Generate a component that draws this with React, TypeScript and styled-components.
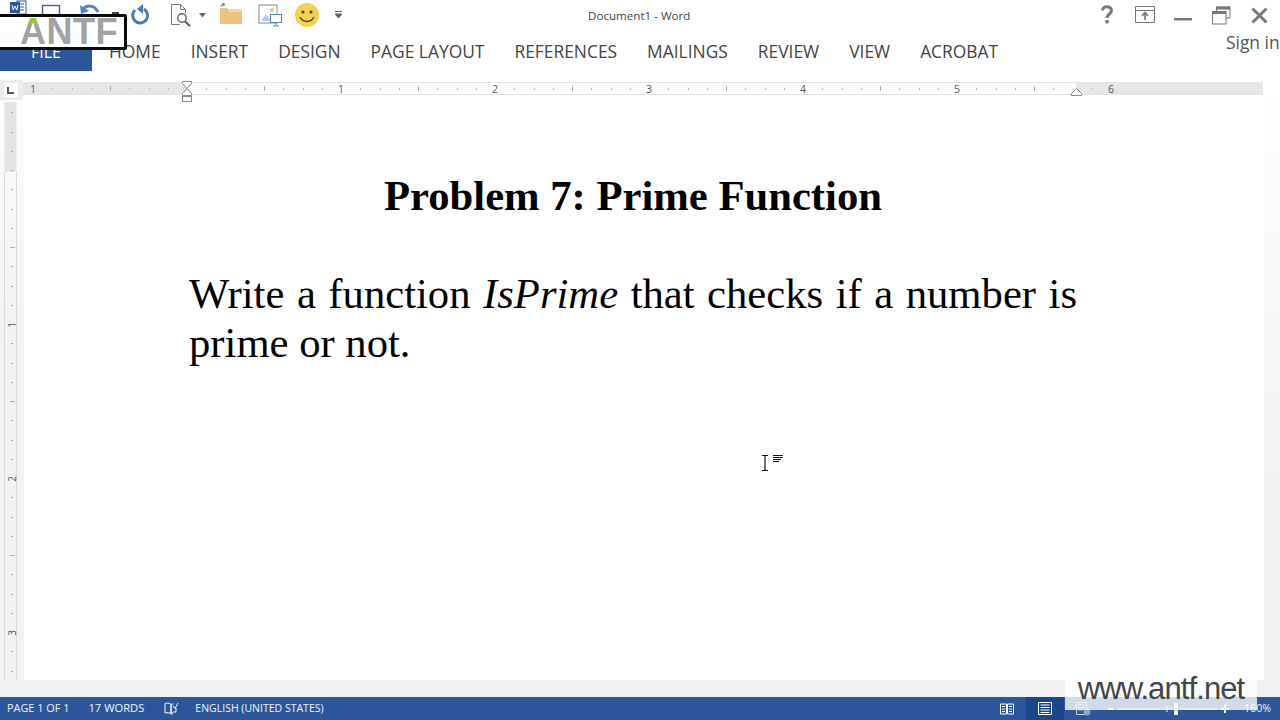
import styled, { createGlobalStyle } from "styled-components";

const UI_FONT = `"Open Sans", "Noto Sans", sans-serif`;
const DOC_FONT = `"Liberation Serif", "Times New Roman", serif`;
const BLUE = "#2b579a";

const GlobalStyle = createGlobalStyle`
  html, body {
    margin: 0;
    padding: 0;
    background: #fff;
  }
`;

const Window = styled.div`
  position: relative;
  width: 1280px;
  height: 720px;
  display: flex;
  flex-direction: column;
  overflow: hidden;
  background: #fff;
  font-family: ${UI_FONT};
`;

const TitleBar = styled.div`
  position: relative;
  height: 32px;
  flex: none;
  display: flex;
  align-items: flex-start;
  justify-content: space-between;
`;

const QuickAccess = styled.div`
  display: flex;
  align-items: flex-start;
`;

const QuickIcon = styled.svg<{ $left: number; $top?: number }>`
  display: block;
  flex: none;
  margin-left: ${(p) => p.$left}px;
  margin-top: ${(p) => p.$top ?? 0}px;
`;

const DocTitle = styled.div`
  position: absolute;
  left: 588px;
  top: 8px;
  font-size: 11.6px;
  line-height: 16px;
  color: #444;
  white-space: nowrap;
`;

const WindowControls = styled.div`
  display: flex;
  align-items: flex-start;
  padding-right: 12px;
`;

const TabBar = styled.div`
  height: 39px;
  flex: none;
  display: flex;
  align-items: stretch;
  gap: 30px;
`;

const FileTab = styled.div`
  width: 92px;
  margin-right: -13px;
  display: flex;
  align-items: center;
  justify-content: center;
  background: ${BLUE};
  color: #fff;
  font-size: 16px;
`;

const Tab = styled.div`
  display: flex;
  align-items: center;
  padding-bottom: 1px;
  color: #444;
  font-size: 17.4px;
  white-space: nowrap;
`;

const SignIn = styled.div`
  position: absolute;
  left: 1226px;
  top: 32px;
  color: #555;
  font-size: 17.4px;
  line-height: 21px;
  white-space: nowrap;
`;

const RulerRow = styled.div`
  position: relative;
  z-index: 1;
  height: 20px;
  flex: none;
  margin-top: 9px;
  display: flex;
`;

const RulerCorner = styled.div`
  width: 23px;
  height: 20px;
  flex: none;
  display: flex;
  align-items: center;
  padding-left: 4px;
  box-sizing: border-box;
  background: #ececec;
`;

const CornerBox = styled.div`
  width: 14px;
  height: 14px;
  background: #fff;
  display: flex;
  align-items: center;
  justify-content: center;
`;

const RulerSvg = styled.svg`
  display: block;
  overflow: visible;
  margin-top: 1px;
`;

const Workspace = styled.div`
  flex: 1;
  min-height: 0;
  display: flex;
`;

const LeftRail = styled.div`
  width: 24px;
  flex: none;
  padding: 2px 0 0 4px;
  box-sizing: border-box;
  background: linear-gradient(#fdfdfd 0, #f2f2f2 240px);
`;

const Page = styled.main`
  flex: 1;
  box-sizing: border-box;
  padding: 71px 0 0 165px;
  background: #fff;
`;

const RightRail = styled.div`
  width: 16px;
  flex: none;
  background: linear-gradient(#fefefe 0, #f2f2f2 400px);
`;

const DocText = styled.div`
  width: 888px;
  font-family: ${DOC_FONT};
  font-size: 42.67px;
  line-height: 49px;
  color: #000;
`;

const DocHeading = styled.h1`
  margin: 0 0 49px;
  font: inherit;
  font-weight: 700;
  text-align: center;
`;

const DocParagraph = styled.p`
  margin: 0;
  text-align: justify;
`;

const BottomBand = styled.div`
  height: 17px;
  flex: none;
  background: #f1f1f1;
`;

const StatusBar = styled.footer`
  height: 23px;
  flex: none;
  display: flex;
  align-items: center;
  background: ${BLUE};
  color: #f2f5fa;
  white-space: nowrap;
`;

const StatusText = styled.span<{ $left: number; $size: number }>`
  margin-left: ${(p) => p.$left}px;
  margin-bottom: 2px;
  font-size: ${(p) => p.$size}px;
`;

const StatusGroup = styled.div`
  margin-left: auto;
  height: 100%;
  display: flex;
  align-items: center;
`;

const ViewButton = styled.div<{ $active?: boolean }>`
  width: 38px;
  height: 100%;
  display: flex;
  align-items: center;
  justify-content: center;
  background: ${(p) => (p.$active ? "#19478a" : "transparent")};
`;

const ZoomSlider = styled.svg`
  display: block;
  margin-left: 6px;
`;

const ZoomLabel = styled.span`
  margin: 0 9px 2px 12px;
  font-size: 10.6px;
`;

const LogoBadge = styled.div`
  position: absolute;
  left: -6px;
  top: 14px;
  width: 133px;
  height: 36px;
  box-sizing: border-box;
  border: 3px solid #0a0a0a;
  border-radius: 2px;
  background: rgba(255, 255, 255, 0.98);
  display: flex;
  align-items: center;
  justify-content: flex-end;
  padding-right: 6px;
`;

const LogoText = styled.span`
  font-family: "Liberation Sans", Arial, sans-serif;
  font-weight: 700;
  font-size: 36px;
  line-height: 30px;
  color: #a2a2a2;
  letter-spacing: 0.5px;
  white-space: nowrap;
`;

const LogoAccent = styled.span`
  background: linear-gradient(#93c83e 0 32%, #a2a2a2 32% 100%);
  -webkit-background-clip: text;
  background-clip: text;
  color: transparent;
`;

const Watermark = styled.div`
  position: absolute;
  left: 1065px;
  top: 680px;
  width: 192px;
  height: 30px;
  display: flex;
  align-items: flex-start;
  justify-content: center;
  background: rgba(255, 255, 255, 0.78);
`;

const WatermarkText = styled.span`
  margin-top: -9px;
  font-family: "Liberation Sans", Arial, sans-serif;
  font-size: 31px;
  line-height: 36px;
  letter-spacing: -0.9px;
  color: #444;
  white-space: nowrap;
`;

const Cursor = styled.svg`
  position: absolute;
  left: 760px;
  top: 453px;
`;

const TABS = ["HOME", "INSERT", "DESIGN", "PAGE LAYOUT", "REFERENCES", "MAILINGS", "REVIEW", "VIEW", "ACROBAT"];

const INCH = 154;
const H_ZERO = 164; // 187 on screen, ruler svg begins at x=23
const V_ZERO = 70; // 172 on screen, svg begins at y=102

const HorizontalRuler = () => {
  const ticks: number[] = [];
  for (let i = -8; i <= 48; i++) ticks.push(i);
  return (
    <RulerSvg width="1240" height="19">
      <rect x="0" y="1" width="164" height="13" fill="#e6e6e6" />
      <rect x="1053" y="1" width="187" height="13" fill="#e6e6e6" />
      <path d="M164 1.5H1053M164 13.5H1053" stroke="#e2e2e2" />
      {ticks.map((i) => {
        const x = Math.round(H_ZERO + (i * INCH) / 8) + 0.5;
        if (i % 8 === 0) return null;
        const half = i % 4 === 0;
        return <path key={i} d={`M${x} ${half ? 5 : 7}V${half ? 10 : 9}`} stroke={half ? "#aaa" : "#bbb"} />;
      })}
      {[-1, 1, 2, 3, 4, 5, 6].map((n) => (
        <text key={n} x={H_ZERO + n * INCH} y="12" textAnchor="middle" fontSize="10.5" fill="#555" fontFamily={UI_FONT}>
          {Math.abs(n)}
        </text>
      ))}
      <path d="M159.5 .5h9v2l-4.500 5-4.500-5zM164 7.500l4.500 5v2h-9v-2z" fill="#fff" stroke="#8a8a8a" />
      <rect x="159.5" y="15.5" width="9" height="5" fill="#fff" stroke="#8a8a8a" />
      <path d="M1053.5 7.500l5 5v2h-10v-2z" fill="#fff" stroke="#8a8a8a" />
    </RulerSvg>
  );
};

const VerticalRuler = () => {
  const ticks: number[] = [];
  for (let i = -3; i <= 27; i++) ticks.push(i);
  return (
    <svg width="14" height="578" style={{ display: "block" }}>
      <rect x="0.5" y="0" width="12" height="70" fill="#e4e4e4" />
      <path d="M0.5 70V578M12.5 70V578" stroke="#dadada" />
      {ticks.map((i) => {
        const y = Math.round(V_ZERO + (i * INCH) / 8) - 1.5;
        if (i % 8 === 0 && i !== 0) return null;
        const half = i % 4 === 0 && i !== 0;
        return <path key={i} d={half ? `M6 ${y}H11` : `M7 ${y}H9`} stroke="#aaa" />;
      })}
      {[1, 2, 3].map((n) => (
        <text
          key={n}
          x="0"
          y="0"
          transform={`translate(12 ${V_ZERO + n * INCH - 1}) rotate(-90)`}
          textAnchor="middle"
          fontSize="10"
          fill="#555"
          fontFamily={UI_FONT}
        >
          {n}
        </text>
      ))}
    </svg>
  );
};

export default function App() {
  return (
    <Window>
      <GlobalStyle />
      <TitleBar>
        <QuickAccess>
          <QuickIcon $left={10} width="17" height="16" viewBox="0 0 17 16">
            <rect x="7" y="1" width="9" height="13" fill="#fff" stroke="#2b579a" />
            <path d="M10 4h4M10 7h4M10 10h4" stroke="#2b579a" />
            <rect x="0" y="2" width="10" height="11" fill="#2b579a" />
            <path d="M2 5l1.2 5 1.8-4 1.8 4L8 5" stroke="#fff" fill="none" strokeWidth="1" />
          </QuickIcon>
          <QuickIcon $left={14} width="20" height="16" viewBox="0 0 20 16">
            <rect x="1.5" y="5.5" width="17" height="10" fill="none" stroke="#6b4a9c" strokeWidth="1.4" />
          </QuickIcon>
          <QuickIcon $left={18} width="22" height="20" viewBox="0 0 22 20">
            <path d="M3 10c4-5 12-6 16 2" fill="none" stroke="#4f86b8" strokeWidth="3" />
            <path d="M1 5l1 9 8-3z" fill="#4f86b8" />
          </QuickIcon>
          <QuickIcon $left={11} width="8" height="18" viewBox="0 0 8 18">
            <rect x="0" y="12" width="7" height="2" fill="#444" />
          </QuickIcon>
          <QuickIcon $left={8} $top={4} width="22" height="24" viewBox="0 0 22 24">
            <path d="M5 5a7.500 7.500 0 1 0 9-1" fill="none" stroke="#3f7fb5" strokeWidth="3" transform="translate(2 1)" />
            <path d="M14 0v10l-6-5z" fill="#3f7fb5" transform="translate(1 0)" />
          </QuickIcon>
          <QuickIcon $left={20} $top={4} width="23" height="23" viewBox="0 0 23 23">
            <path d="M1.500 20.500V.5h9l5 5v4M1.500 20.500h8" fill="none" stroke="#777" />
            <path d="M10.500 .5v5h5" fill="none" stroke="#777" />
            <circle cx="12" cy="14" r="4.300" fill="#fff" stroke="#666" strokeWidth="1.500" />
            <path d="M15 17.500l5 4.500" stroke="#555" strokeWidth="2" />
          </QuickIcon>
          <QuickIcon $left={5} $top={13} width="9" height="5" viewBox="0 0 9 5">
            <path d="M1 0h7l-3.500 4.500z" fill="#666" />
          </QuickIcon>
          <QuickIcon $left={12} $top={3} width="24" height="22" viewBox="0 0 24 22">
            <path d="M1 5h7l2 2h13v14H1z" fill="#efc27d" />
            <path d="M10 6h13v3H10z" fill="#f5d7a4" />
            <path d="M2 4c0-2 1-3 3-3M4 0l2 1.500-2 1.500z" stroke="#3f7fb5" fill="none" />
          </QuickIcon>
          <QuickIcon $left={15} $top={4} width="25" height="23" viewBox="0 0 25 23">
            <rect x="1" y="1" width="18" height="18" fill="#fff" stroke="#888" />
            <path d="M3 17l5-7 5 7z" fill="#b5cde6" />
            <circle cx="14" cy="6" r="2" fill="#efc27d" />
            <rect x="12.500" y="10.500" width="11" height="8" fill="#fff" stroke="#4f86b8" />
            <path d="M18 18.500v3M15 22h6" stroke="#4f86b8" />
          </QuickIcon>
          <QuickIcon $left={11} $top={2} width="26" height="26" viewBox="0 0 26 26">
            <circle cx="13" cy="13" r="12" fill="#f6d14d" />
            <circle cx="9" cy="10" r="1.600" fill="#444" />
            <circle cx="17" cy="10" r="1.600" fill="#444" />
            <path d="M6 15c3 6 11 6 14 0" fill="none" stroke="#444" strokeWidth="1.400" />
          </QuickIcon>
          <QuickIcon $left={14} $top={11} width="9" height="9" viewBox="0 0 9 9">
            <path d="M1 .5h7M1 3h7l-3.500 4z" stroke="#666" fill="#666" strokeWidth="1" />
          </QuickIcon>
        </QuickAccess>
        <DocTitle>Document1 - Word</DocTitle>
        <WindowControls>
          <QuickIcon $left={0} $top={5} width="14" height="20" viewBox="0 0 14 20">
            <path d="M2.500 5.500c0-5 9-5 9 0 0 3.500-4.500 3.500-4.500 7.500" fill="none" stroke="#777" strokeWidth="3" />
            <rect x="5.300" y="15" width="3.400" height="3.400" fill="#777" />
          </QuickIcon>
          <QuickIcon $left={21} $top={6} width="21" height="18" viewBox="0 0 21 18">
            <path d="M.5 .5h19v16H.5zM.5 4.500h19" fill="none" stroke="#777" />
            <path d="M10 14V7M7 10l3-3.500 3 3.500" fill="none" stroke="#777" strokeWidth="1.600" />
          </QuickIcon>
          <QuickIcon $left={18} $top={18} width="19" height="4" viewBox="0 0 19 4">
            <rect width="18" height="2.400" fill="#777" />
          </QuickIcon>
          <QuickIcon $left={19} $top={6} width="19" height="19" viewBox="0 0 19 19">
            <path d="M4.500 5V.8h13.500v11h-4" fill="none" stroke="#777" />
            <path d="M4.500 1h13.500v2.500H4.500z" fill="#777" />
            <rect x=".5" y="5.500" width="13.500" height="12.500" fill="#fff" stroke="#777" />
            <rect x=".5" y="5.500" width="13.500" height="2.500" fill="#777" />
          </QuickIcon>
          <QuickIcon $left={20} $top={7} width="17" height="17" viewBox="0 0 17 17">
            <path d="M1.500 1.500l14 14M15.500 1.500l-14 14" stroke="#777" strokeWidth="3" />
          </QuickIcon>
        </WindowControls>
      </TitleBar>

      <TabBar>
        <FileTab>FILE</FileTab>
        {TABS.map((tab) => (
          <Tab key={tab}>{tab}</Tab>
        ))}
      </TabBar>
      <SignIn>Sign in</SignIn>

      <RulerRow>
        <RulerCorner>
          <CornerBox>
            <svg width="8" height="8" viewBox="0 0 8 8">
              <path d="M1 1v6h6" fill="none" stroke="#555" strokeWidth="2" />
            </svg>
          </CornerBox>
        </RulerCorner>
        <HorizontalRuler />
      </RulerRow>

      <Workspace>
        <LeftRail>
          <VerticalRuler />
        </LeftRail>
        <Page>
          <DocText>
            <DocHeading>Problem 7: Prime Function</DocHeading>
            <DocParagraph>
              Write a function <i>IsPrime</i> that checks if a number is prime or not.
            </DocParagraph>
          </DocText>
        </Page>
        <RightRail />
      </Workspace>
      <BottomBand />

      <StatusBar>
        <StatusText $left={7} $size={10.9}>PAGE 1 OF 1</StatusText>
        <StatusText $left={19} $size={11.2}>17 WORDS</StatusText>
        <QuickIcon $left={20} width="15" height="14" viewBox="0 0 15 14">
          <path d="M7 2C5 1 3 1 1 1.500v9.500c2-.5 4-.5 6 .5V2zM7 2v9.500M8 13V10" fill="none" stroke="#fff" />
          <path d="M9 4l2 2.500L14 1M9.500 2H8M9 10h3V6" fill="none" stroke="#fff" />
        </QuickIcon>
        <StatusText $left={16} $size={10.5}>ENGLISH (UNITED STATES)</StatusText>
        <StatusGroup>
          <ViewButton>
            <svg width="14" height="12" viewBox="0 0 14 12">
              <path d="M.5 1h6v10h-6zM7.500 1h6v10h-6z" fill="none" stroke="#fff" />
              <path d="M2 3.500h3M2 6h3M2 8.500h3M9 3.500h3M9 6h3M9 8.500h3" stroke="#fff" />
            </svg>
          </ViewButton>
          <ViewButton $active>
            <svg width="14" height="13" viewBox="0 0 14 13">
              <path d="M.5 .5h13v12H.5z" fill="none" stroke="#fff" />
              <path d="M2.500 3h9M2.500 5.500h9M2.500 8h9M2.500 10.500h9" stroke="#fff" />
            </svg>
          </ViewButton>
          <ViewButton>
            <svg width="15" height="14" viewBox="0 0 15 14">
              <path d="M.5 .5h10v12H.5z" fill="none" stroke="#cfd8e8" />
              <path d="M2.500 3h6M2.500 5.500h6M2.500 8h4" stroke="#cfd8e8" />
              <circle cx="11" cy="10" r="3.500" fill="#8ea6cc" />
            </svg>
          </ViewButton>
          <ZoomSlider width="124" height="12" viewBox="0 0 124 12">
            <path d="M0 6h5" stroke="#fff" strokeWidth="2" />
            <path d="M9 6h100" stroke="#fff" />
            <path d="M59 3v6" stroke="#fff" />
            <rect x="66" y="0" width="4" height="12" fill="#fff" />
            <path d="M113 6h8M117 2v8" stroke="#fff" strokeWidth="2" />
          </ZoomSlider>
          <ZoomLabel>160%</ZoomLabel>
        </StatusGroup>
      </StatusBar>

      <LogoBadge>
        <LogoText>
          <LogoAccent>A</LogoAccent>NTF
        </LogoText>
      </LogoBadge>

      <Watermark>
        <WatermarkText>www.antf.net</WatermarkText>
      </Watermark>

      <Cursor width="26" height="20" viewBox="0 0 26 20">
        <path d="M2 2.500h2.500l.5.500.5-.500H8M5 3v14M2 17.500h2.500l.5-.500.5.500H8" fill="none" stroke="#111" strokeWidth="1.200" />
        <path d="M13 2.500h10M13 4.500h10M13 6.500h8M13 8.500h6" stroke="#111" />
      </Cursor>
    </Window>
  );
}
